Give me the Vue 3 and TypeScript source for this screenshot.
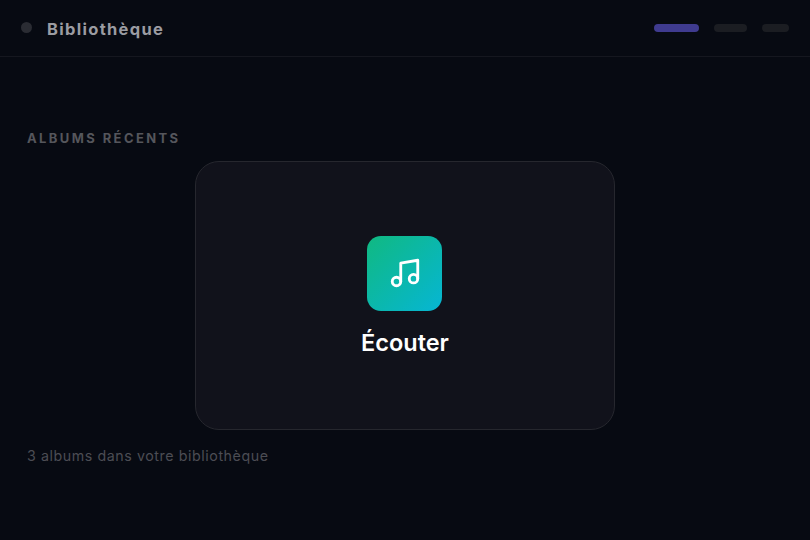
<script setup lang="ts">
const title = 'Bibliothèque'
</script>

<template>
  <div class="page">
    <header class="top">
      <div class="brand">
        <span class="dot"></span>
        <span class="title">{{ title }}</span>
      </div>
      <div class="bars">
        <span class="bar bar-a"></span>
        <span class="bar bar-b"></span>
        <span class="bar bar-c"></span>
      </div>
    </header>
    <main class="main">
      <h2 class="label">ALBUMS RÉCENTS</h2>
      <div class="stage">
        <div class="card">
          <div class="tile">
            <svg width="34" height="34" viewBox="0 0 24 24" fill="none" stroke="#fff" stroke-width="2" stroke-linecap="round" stroke-linejoin="round">
              <path d="M9 18V5l12-2v13" />
              <circle cx="6" cy="18" r="3" />
              <circle cx="18" cy="16" r="3" />
            </svg>
          </div>
          <div class="name">Écouter</div>
        </div>
      </div>
      <p class="foot">3 albums dans votre bibliothèque</p>
    </main>
  </div>
</template>

<style>
html, body { margin: 0; background: #070a12; }
</style>

<style scoped>
.page {
  width: 810px;
  height: 540px;
  background: #070a12;
  font-family: Inter, "Liberation Sans", sans-serif;
  overflow: hidden;
}
.top {
  height: 57px;
  box-sizing: border-box;
  border-bottom: 1px solid #15171f;
  display: flex;
  align-items: center;
  justify-content: space-between;
  padding: 1px 21px 0 21px;
}
.brand { display: flex; align-items: center; gap: 15px; }
.dot { width: 11px; height: 11px; border-radius: 50%; background: #2a2c33; margin-top: -2px; }
.title {
  font-size: 16.5px;
  font-weight: 700;
  letter-spacing: 1.3px;
  color: #9b9ca2;
}
.bars { display: flex; align-items: center; gap: 15px; margin-top: -1px; }
.bar { height: 8px; border-radius: 4px; display: block; }
.bar-a { width: 45px; background: #3f3b8f; }
.bar-b { width: 33px; background: #1b1d22; }
.bar-c { width: 27px; background: #1b1d22; }
.main { padding: 73px 27px 0; }
.label {
  margin: 0;
  font-size: 13px;
  line-height: 16px;
  font-weight: 700;
  letter-spacing: 2.4px;
  color: #55565c;
}
.stage { display: flex; justify-content: center; margin-top: 15px; }
.card {
  width: 420px;
  height: 269px;
  box-sizing: border-box;
  border: 1px solid #26272e;
  border-radius: 24px;
  background: #11121b;
  display: flex;
  flex-direction: column;
  align-items: center;
  gap: 18px;
  padding-top: 73.5px;
}
.tile {
  width: 75px;
  height: 75px;
  margin-left: -0.5px;
  border-radius: 14px;
  background: linear-gradient(135deg, #10b981, #06b6d4);
  display: flex;
  align-items: center;
  justify-content: center;
}
.name {
  font-size: 23.5px;
  line-height: 28px;
  font-weight: 600;
  color: #fff;
  margin-top: 0.5px;
}
.foot {
  margin: 16px 0 0;
  font-size: 14.25px;
  line-height: 20px;
  letter-spacing: 0.56px;
  color: #4c4d54;
}
</style>
